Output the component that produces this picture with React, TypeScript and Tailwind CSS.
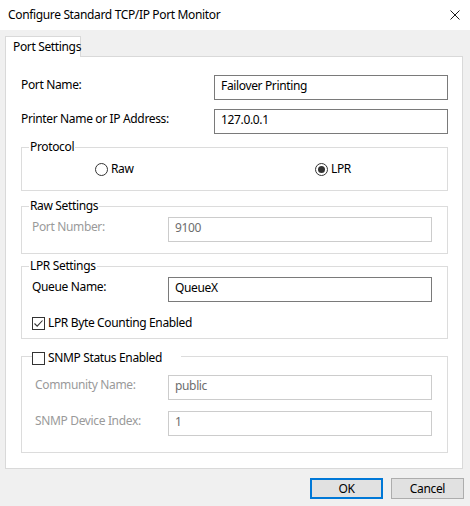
import React from "react";

const font = "font-['Noto_Sans',sans-serif] tracking-[-0.35px]";

function TextBox({ value, disabled }: { value: string; disabled?: boolean }) {
  return (
    <div
      className={`h-[25px] pt-[2px] pl-[6px] leading-[16px] bg-white border ${
        disabled ? "border-[#cccccc] text-[#6d6d6d]" : "border-[#7a7a7a] text-black"
      }`}
    >
      {value}
    </div>
  );
}

function Radio({ checked, label }: { checked?: boolean; label: string }) {
  return (
    <div className="flex items-center h-[16px]">
      <span className="w-[13px] h-[13px] rounded-full border border-[#333333] flex items-center justify-center bg-white">
        {checked && <span className="w-[7px] h-[7px] rounded-full bg-[#333333]" />}
      </span>
      <span className="ml-[3px]">{label}</span>
    </div>
  );
}

function Check({ checked }: { checked?: boolean }) {
  return (
    <span className="w-[13px] h-[13px] border border-[#333333] bg-white flex items-center justify-center shrink-0">
      {checked && (
        <svg width="11" height="11" viewBox="0 0 11 11">
          <path d="M1.5 5.5 L4.2 8.2 L9.5 2.5" fill="none" stroke="#333333" strokeWidth="1.1" />
        </svg>
      )}
    </span>
  );
}

function Field({
  label,
  value,
  disabled,
  labelClass,
}: {
  label: string;
  value: string;
  disabled?: boolean;
  labelClass: string;
}) {
  return (
    <div className="flex items-start">
      <div className={`${labelClass} pt-[2px] leading-[16px] ${disabled ? "text-[#9a9a9a]" : "text-black"}`}>
        {label}
      </div>
      <div className="w-[264px]">
        <TextBox value={value} disabled={disabled} />
      </div>
    </div>
  );
}

export default function App() {
  return (
    <div className={`w-[470px] h-[506px] bg-[#f0f0f0] flex flex-col text-[12px] leading-[16px] text-black ${font}`}>
      {/* title bar */}
      <div className="h-[30px] bg-white flex items-center justify-between pl-[8px] pr-[10px] shrink-0">
        <span className="text-[12px]">Configure Standard TCP/IP Port Monitor</span>
        <svg width="10" height="10" viewBox="0 0 10 10">
          <path d="M0.5 0.5 L9.5 9.5 M9.5 0.5 L0.5 9.5" stroke="#1a1a1a" strokeWidth="1" />
        </svg>
      </div>

      <div className="pl-[5px] pt-[6px] flex flex-col">
        {/* tab header */}
        <div className="flex">
          <div className="relative z-10 -mb-px w-[76px] h-[21px] bg-white border border-b-0 border-[#d9d9d9] pl-[7px] flex items-center whitespace-nowrap">
            Port Settings
          </div>
        </div>

        {/* tab page */}
        <div className="w-[458px] h-[413px] box-border bg-white border border-[#d9d9d9] pl-[15px] pr-[14px] pt-[18px] flex flex-col">
          <div className="flex items-start">
            <div className="w-[193px] pt-[2px]">Port Name:</div>
            <div className="w-[234px]">
              <TextBox value="Failover Printing" />
            </div>
          </div>
          <div className="flex items-start mt-[9px]">
            <div className="w-[193px] pt-[2px]">Printer Name or IP Address:</div>
            <div className="w-[234px]">
              <TextBox value="127.0.0.1" />
            </div>
          </div>

          {/* protocol */}
          <fieldset className="mt-[5px] border border-[#dcdcdc]">
            <legend className="ml-[7px] px-[1px] leading-[16px]">Protocol</legend>
            <div className="flex pt-[6px] pb-[13px] pl-[73px]">
              <div className="w-[220px]">
                <Radio label="Raw" />
              </div>
              <Radio checked label="LPR" />
            </div>
          </fieldset>

          {/* raw */}
          <fieldset className="mt-[7px] border border-[#dcdcdc]">
            <legend className="ml-[7px] px-[1px] leading-[16px]">Raw Settings</legend>
            <div className="pt-[3px] pb-[11px] pl-[10px]">
              <Field label="Port Number:" value="9100" disabled labelClass="w-[136px]" />
            </div>
          </fieldset>

          {/* lpr */}
          <fieldset className="mt-[4px] border border-[#dcdcdc]">
            <legend className="ml-[7px] px-[1px] leading-[16px]">LPR Settings</legend>
            <div className="pt-[3px] pb-[7px] pl-[10px]">
              <Field label="Queue Name:" value="QueueX" labelClass="w-[136px]" />
              <div className="mt-[13px] h-[16px] flex items-center">
                <Check checked />
                <span className="ml-[3px]">LPR Byte Counting Enabled</span>
              </div>
            </div>
          </fieldset>

          {/* snmp */}
          <fieldset className="mt-[9px] border border-[#dcdcdc]">
            <legend className="ml-[10px] w-[149px] leading-[16px]">
              <div className="flex items-center h-[16px] translate-y-[2px]">
                <Check />
                <span className="ml-[3px]">SNMP Status Enabled</span>
              </div>
            </legend>
            <div className="pt-[11px] pb-[16px] pl-[13px]">
              <Field label="Community Name:" value="public" disabled labelClass="w-[133px]" />
              <div className="mt-[11px]">
                <Field label="SNMP Device Index:" value="1" disabled labelClass="w-[133px]" />
              </div>
            </div>
          </fieldset>
        </div>
      </div>

      {/* dialog buttons */}
      <div className="flex justify-end gap-[8px] pr-[6px] pt-[9px]">
        <button className="w-[73px] h-[21px] bg-[#e1e1e1] border-2 border-[#0078d7] flex items-center justify-center">
          OK
        </button>
        <button className="w-[73px] h-[21px] bg-[#e1e1e1] border border-[#adadad] flex items-center justify-center">
          Cancel
        </button>
      </div>
    </div>
  );
}
